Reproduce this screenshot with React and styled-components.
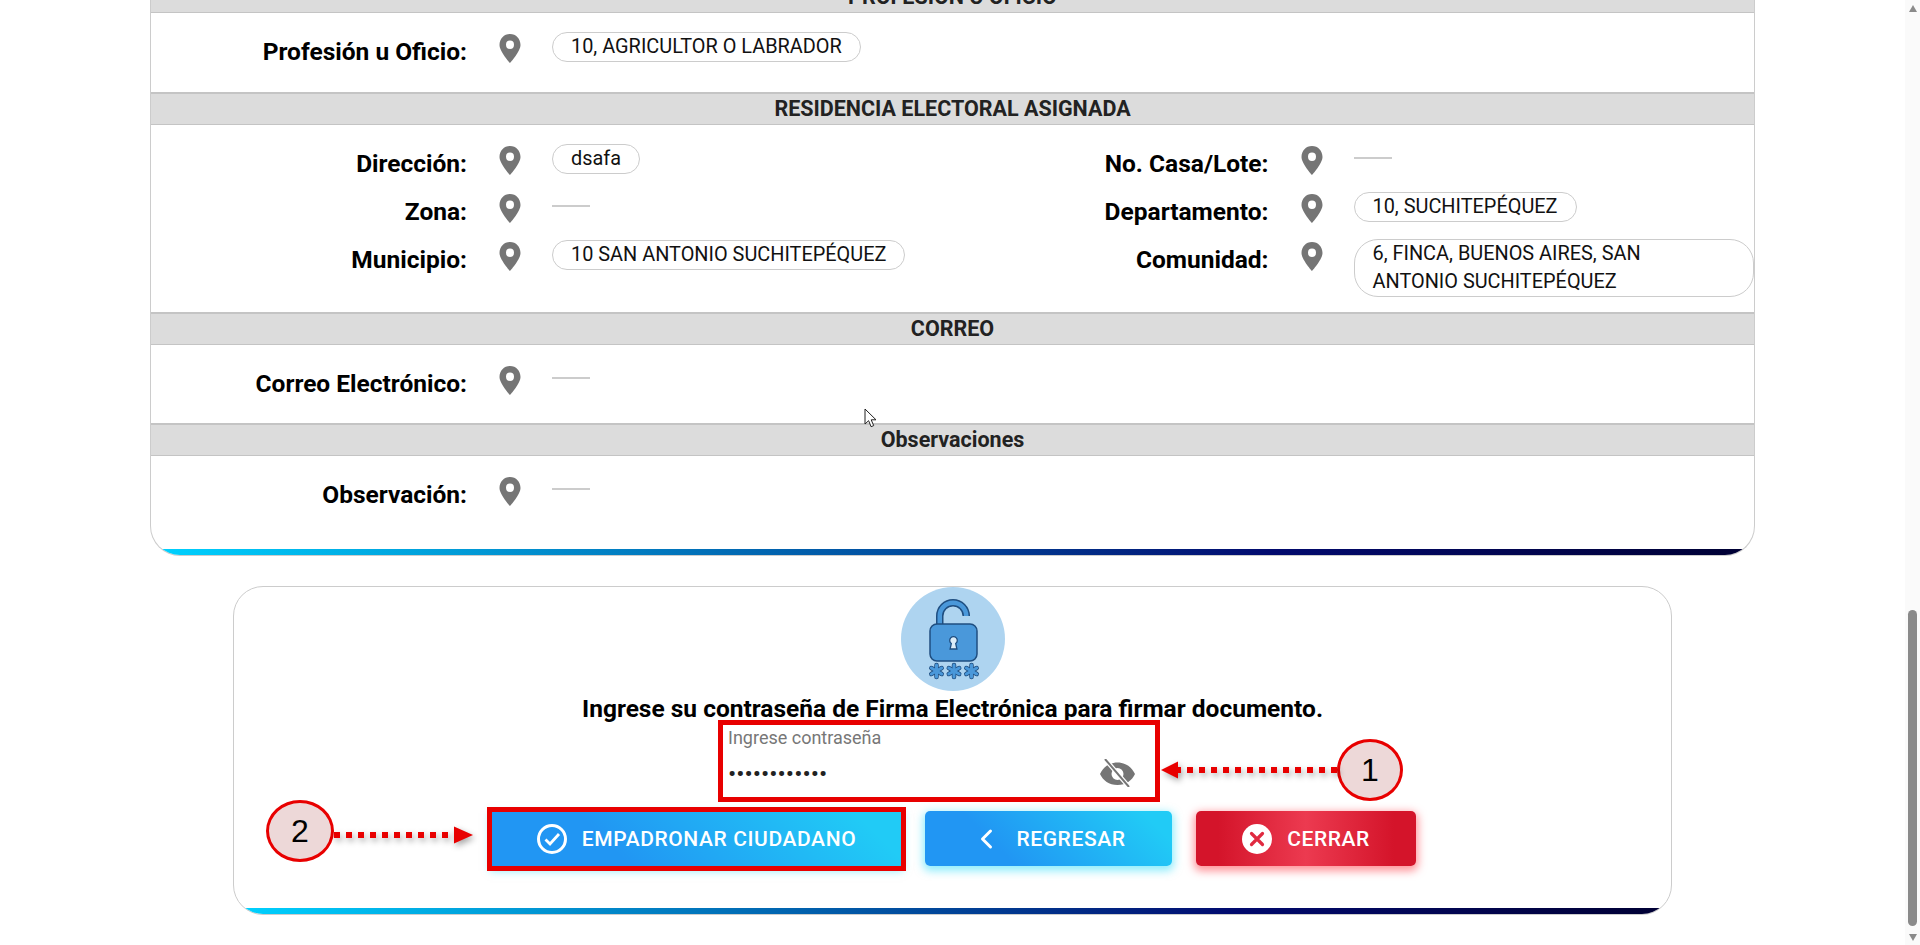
import React from "react";
import styled, { createGlobalStyle } from "styled-components";

const GlobalStyle = createGlobalStyle`
  html, body {
    margin: 0;
    padding: 0;
    background: #fff;
    font-family: Roboto, "Liberation Sans", sans-serif;
  }
`;

const Shell = styled.div`
  position: relative;
  display: flex;
  height: 945px;
  overflow: hidden;
`;

const Page = styled.main`
  flex: 1;
  min-width: 0;
`;

const Card = styled.section`
  margin: -20px 150px 0;
  border: 1px solid #ccc;
  border-top: 0;
  border-radius: 0 0 30px 30px;
  overflow: hidden;
`;

const Header = styled.h3`
  margin: 0;
  box-sizing: border-box;
  height: 33px;
  line-height: 30px;
  border-top: 2px solid #c4c4c4;
  border-bottom: 1px solid #c4c4c4;
  background: #dcdcdc;
  color: #222;
  text-align: center;
  font-size: 21.5px;
  font-weight: 700;
`;

const Body = styled.div`
  display: grid;
  grid-template-columns: 1fr 1fr;
  padding: 19px 0 ${({ $bottom = 14 }) => $bottom}px;
`;

const Column = styled.div`
  display: flex;
  flex-direction: column;
  gap: 2px;
  min-width: 0;
`;

const Row = styled.div`
  display: flex;
  align-items: flex-start;
  min-height: 46px;
`;

const Label = styled.div`
  flex: 0 0 316px;
  text-align: right;
  line-height: 40px;
  font-size: 24.5px;
  font-weight: 700;
  color: #000;
  white-space: nowrap;
`;

const PinIcon = styled.svg`
  flex: none;
  width: 22px;
  height: 29px;
  margin: 2px 31px 0 32px;
  fill: #757575;
`;

const Chip = styled.div`
  display: ${({ $block }) => ($block ? "block" : "inline-block")};
  box-sizing: border-box;
  min-height: 30px;
  margin: ${({ $block }) => ($block ? "-1px 0 1px" : "0")};
  padding: 0 18px;
  border: 1px solid #ccc;
  border-radius: ${({ $block }) => ($block ? 24 : 20)}px;
  font-size: 19.9px;
  line-height: 28px;
  color: #111;
`;

const Dash = styled.div`
  width: 38px;
  height: 2px;
  margin-top: 13px;
  background: #ccc;
`;

const Value = styled.div`
  flex: 1;
  min-width: 0;
`;

const Bar = styled.div`
  height: 6px;
  margin-top: ${({ $gap }) => $gap}px;
  background: linear-gradient(90deg, #00d2ff 0%, #020a6e 70%, #000033 100%);
`;

const SignCard = styled.section`
  width: 1439px;
  margin: 30px auto 0;
  box-sizing: border-box;
  border: 1px solid #ccc;
  border-radius: 30px;
  overflow: hidden;
  position: relative;
`;

const SignBody = styled.div`
  display: flex;
  flex-direction: column;
  align-items: center;
`;

const Avatar = styled.div`
  width: 104px;
  height: 104px;
  border-radius: 50%;
  background: #aed4f0;
`;

const Prompt = styled.h2`
  margin: 7px 0 0;
  font-size: 24.5px;
  line-height: 22px;
  font-weight: 700;
  color: #000;
  white-space: nowrap;
`;

const PasswordBox = styled.div`
  position: relative;
  box-sizing: border-box;
  width: 442px;
  height: 82px;
  margin-right: 27px;
  padding: 2px 20px 0 5px;
  border: 5px solid #e80000;
`;

const FieldLabel = styled.label`
  display: block;
  font-size: 18px;
  line-height: 22px;
  color: #777;
`;

const FieldRow = styled.div`
  display: flex;
  align-items: center;
  height: 40px;
  margin-top: 4px;
`;

const PasswordInput = styled.input`
  flex: 1;
  min-width: 0;
  padding: 0;
  border: 0;
  outline: 0;
  font-family: Roboto, sans-serif;
  font-size: 24.5px;
  letter-spacing: 0;
  color: #222;
  background: transparent;
`;

const Actions = styled.div`
  display: flex;
  gap: 24px;
  margin-top: 9px;
  padding-left: 3px;
`;

const Marked = styled.div`
  position: relative;
  align-self: flex-end;
  outline: 5px solid #e80000;
`;

const Button = styled.button`
  display: flex;
  align-items: center;
  justify-content: center;
  gap: 15px;
  width: ${({ $width }) => $width}px;
  height: ${({ $square }) => ($square ? 54 : 55)}px;
  padding: 0;
  border: 0;
  border-radius: ${({ $square }) => ($square ? 0 : 5)}px;
  font-family: Roboto, sans-serif;
  font-size: 21px;
  font-weight: 500;
  letter-spacing: 0.6px;
  color: #fff;
  background: ${({ $danger }) =>
    $danger
      ? "linear-gradient(90deg, #d4142a 10%, #ec3a50 50%, #d4142a 90%)"
      : "linear-gradient(45deg, #2196f3 30%, #21cbf6 90%)"};
  box-shadow: ${({ $danger }) =>
    $danger
      ? "0 3px 8px 2px rgba(255, 90, 100, 0.65)"
      : "0 3px 8px 2px rgba(33, 220, 250, 0.5)"};
`;

const ButtonIcon = styled.svg`
  flex: none;
  width: 30px;
  height: 30px;
`;

const Callout = styled.div`
  position: absolute;
  display: flex;
  align-items: center;
  ${({ $side }) =>
    $side === "right"
      ? "left: calc(100% + 6px); top: 14px;"
      : "right: calc(100% + 19px); top: -12px;"}
`;

const Bubble = styled.div`
  box-sizing: border-box;
  flex: none;
  display: flex;
  align-items: center;
  justify-content: center;
  width: ${({ $wide }) => ($wide ? 68 : 66)}px;
  height: 62px;
  border: 3.5px solid #e80000;
  border-radius: 50%;
  background: #edd8d8;
  font-family: "Liberation Sans", Arial, sans-serif;
  font-size: 32px;
  font-weight: 400;
  color: #000;
`;

const ArrowSvg = styled.svg`
  flex: none;
  overflow: visible;
  margin-top: ${({ $drop }) => $drop}px;
  filter: drop-shadow(2px 3px 3px rgba(0, 0, 0, 0.35));
`;

const Cursor = styled.svg`
  position: absolute;
  left: 864px;
  top: 408px;
  width: 13px;
  height: 20px;
`;

const Scrollbar = styled.div`
  flex: none;
  box-sizing: border-box;
  width: 15px;
  height: 945px;
  padding: 5px 0 4px;
  display: flex;
  flex-direction: column;
  align-items: center;
  background: #fafafa;
`;

const ScrollArrow = styled.div`
  width: 0;
  height: 0;
  border-left: 4.5px solid transparent;
  border-right: 4.5px solid transparent;
  border-${({ $dir }) => ($dir === "up" ? "bottom" : "top")}: 7px solid #8a8a8a;
`;

const Thumb = styled.div`
  width: 9px;
  height: 316px;
  margin: auto 0 8px;
  border-radius: 5px;
  background: #8a8a8a;
`;

const Pin = () => (
  <PinIcon viewBox="0 0 22 29">
    <path
      fillRule="evenodd"
      d="M11 0C4.900 0 0.500 4.900 0.500 11c0 6.500 10.500 18 10.500 18s10.500-11.500 10.500-18C21.500 4.900 17.100 0 11 0zm0 6.500a4 4.200 0 1 1 0 8.400 4 4.200 0 0 1 0-8.400z"
    />
  </PinIcon>
);

const Field = ({ label, value, dash, block }) => (
  <Row>
    <Label>{label}</Label>
    <Pin />
    <Value>{dash ? <Dash /> : <Chip $block={block}>{value}</Chip>}</Value>
  </Row>
);

const LockIcon = () => (
  <svg width="104" height="104" viewBox="0 0 104 104">
    <path d="M38.750 38V29a13.250 13.250 0 0 1 26.500 0v-1" fill="none" stroke="#1f4e80" strokeWidth="7.500" strokeLinecap="round" />
    <path d="M38.750 38V29a13.250 13.250 0 0 1 26.500 0v-1" fill="none" stroke="#4a98da" strokeWidth="4.500" strokeLinecap="round" />
    <rect x="29" y="37" width="47" height="37" rx="7" fill="#4a98da" stroke="#1f4e80" strokeWidth="1.500" />
    <path d="M50.300 56.500a3.800 3.800 0 1 1 4.400 0l1.200 5.500h-6.800z" fill="#dcecf8" stroke="#1f4e80" strokeWidth="1.300" />
    {[35.500, 53, 70.500].map((x) => (
      <g key={x} transform={`translate(${x} 84)`}>
        {[0, 60, 120].map((a) => (
          <line key={a} y1="-6" y2="6" transform={`rotate(${a})`} stroke="#1f4e80" strokeWidth="4.500" strokeLinecap="round" />
        ))}
        {[0, 60, 120].map((a) => (
          <line key={a} y1="-6" y2="6" transform={`rotate(${a})`} stroke="#4a98da" strokeWidth="3" strokeLinecap="round" />
        ))}
      </g>
    ))}
  </svg>
);

const EyeOff = () => (
  <svg width="35" height="28" viewBox="0 0 35 28" style={{ flex: "none" }}>
    <path
      fillRule="evenodd"
      d="M17.500 3.500C9 3.500 3 8.500 0 15c3 6.500 9 11 17.500 11S32 21.500 35 15C32 8.500 26 3.500 17.500 3.500zm0 5.500a6 6 0 1 1 0 12 6 6 0 0 1 0-12z"
      fill="#757575"
    />
    <line x1="5" y1="0" x2="29" y2="28" stroke="#fff" strokeWidth="4.500" />
    <line x1="5" y1="0" x2="29" y2="28" stroke="#757575" strokeWidth="2" />
  </svg>
);

const CheckCircle = () => (
  <ButtonIcon viewBox="0 0 30 30">
    <circle cx="15" cy="15" r="13.500" fill="none" stroke="#fff" strokeWidth="3" />
    <path d="M8.500 15.500l4.500 4.500 9-10" fill="none" stroke="#fff" strokeWidth="2.800" />
  </ButtonIcon>
);

const Chevron = () => (
  <ButtonIcon viewBox="0 0 30 30">
    <path d="M19.500 7L11.500 15l8 8" fill="none" stroke="#fff" strokeWidth="3" strokeLinecap="round" strokeLinejoin="round" />
  </ButtonIcon>
);

const CloseCircle = () => (
  <ButtonIcon viewBox="0 0 30 30">
    <circle cx="15" cy="15" r="15" fill="#fff" />
    <path d="M9.500 9.500l11 11m0-11l-11 11" fill="none" stroke="#e02a40" strokeWidth="3.200" strokeLinecap="round" />
  </ButtonIcon>
);

const Arrow = ({ length, dir, drop = 0 }) => {
  const tip = dir === "left" ? 0 : length;
  const base = dir === "left" ? 17 : length - 19;
  const far = dir === "left" ? length : 0;
  return (
    <ArrowSvg width={length} height="18" viewBox={`0 0 ${length} 18`} $drop={drop}>
      <line x1={far} y1="9" x2={base} y2="9" stroke="#e80000" strokeWidth="6" strokeDasharray="6 6" />
      <polygon points={`${tip},9 ${base},0.5 ${base},17.5`} fill="#e80000" />
    </ArrowSvg>
  );
};

const App = () => (
  <>
    <GlobalStyle />
    <Shell>
      <Page>
        <Card>
          <Header>PROFESIÓN U OFICIO</Header>
          <Body>
            <Column>
              <Field label="Profesión u Oficio:" value="10, AGRICULTOR O LABRADOR" />
            </Column>
          </Body>
          <Header>RESIDENCIA ELECTORAL ASIGNADA</Header>
          <Body>
            <Column>
              <Field label="Dirección:" value="dsafa" />
              <Field label="Zona:" dash />
              <Field label="Municipio:" value="10 SAN ANTONIO SUCHITEPÉQUEZ" />
            </Column>
            <Column>
              <Field label="No. Casa/Lote:" dash />
              <Field label="Departamento:" value="10, SUCHITEPÉQUEZ" />
              <Field
                label="Comunidad:"
                block
                value={
                  <>
                    6, FINCA, BUENOS AIRES, SAN
                    <br />
                    ANTONIO SUCHITEPÉQUEZ
                  </>
                }
              />
            </Column>
          </Body>
          <Header>CORREO</Header>
          <Body $bottom={13}>
            <Column>
              <Field label="Correo Electrónico:" dash />
            </Column>
          </Body>
          <Header>Observaciones</Header>
          <Body>
            <Column>
              <Field label="Observación:" dash />
            </Column>
          </Body>
          <Bar $gap={14} />
        </Card>

        <SignCard>
          <SignBody>
            <Avatar>
              <LockIcon />
            </Avatar>
            <Prompt>Ingrese su contraseña de Firma Electrónica para firmar documento.</Prompt>
            <PasswordBox>
              <FieldLabel>Ingrese contraseña</FieldLabel>
              <FieldRow>
                <PasswordInput type="password" value="123456789012" readOnly />
                <EyeOff />
              </FieldRow>
              <Callout $side="right">
                <Arrow length={176} dir="left" />
                <Bubble>1</Bubble>
              </Callout>
            </PasswordBox>
            <Actions>
              <Marked>
                <Button $width={409} $square>
                  <CheckCircle />
                  EMPADRONAR CIUDADANO
                </Button>
                <Callout $side="left">
                  <Bubble $wide>2</Bubble>
                  <Arrow length={139} dir="right" drop={8} />
                </Callout>
              </Marked>
              <Button $width={247}>
                <Chevron />
                REGRESAR
              </Button>
              <Button $width={220} $danger>
                <CloseCircle />
                CERRAR
              </Button>
            </Actions>
          </SignBody>
          <Bar $gap={42} />
        </SignCard>
      </Page>

      <Scrollbar>
        <ScrollArrow $dir="up" />
        <Thumb />
        <ScrollArrow $dir="down" />
      </Scrollbar>

      <Cursor viewBox="0 0 13 20">
        <path d="M1 1v15l3.600-3.300 2.500 6 2.600-1.100-2.500-5.800H12z" fill="#fff" stroke="#222" strokeWidth="1" />
      </Cursor>
    </Shell>
  </>
);

export default App;
